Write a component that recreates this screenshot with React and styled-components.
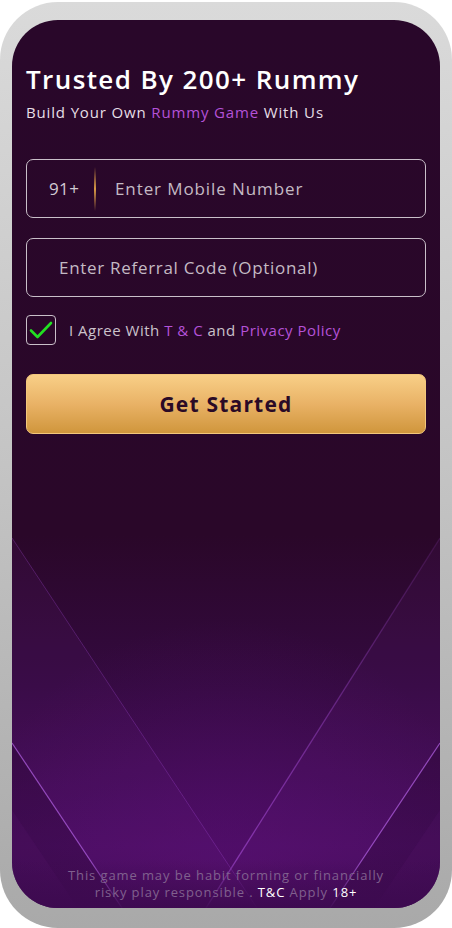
import React from "react";
import styled, { createGlobalStyle } from "styled-components";

const Global = createGlobalStyle`
  html, body { margin: 0; padding: 0; background: #ffffff; }
  body { font-family: "Open Sans", "DejaVu Sans", sans-serif; }
  * { box-sizing: border-box; }
`;

const Frame = styled.div`
  width: 452px;
  height: 926px;
  margin-top: 2px;
  padding: 18px 12px 18px 12px;
  border-radius: 58px;
  background: linear-gradient(180deg, #dadada 0%, #c4c4c4 50%, #a9a9a9 100%);
`;

const Screen = styled.div`
  position: relative;
  height: 888px;
  border-radius: 46px;
  overflow: hidden;
  background: linear-gradient(
    180deg,
    #29072a 0%,
    #2a0729 58%,
    #340a40 75%,
    #470c5e 93%,
    #3f0a52 100%
  );
  display: flex;
  flex-direction: column;
`;

const Backdrop = styled.svg`
  position: absolute;
  left: 0;
  top: 0;
  width: 428px;
  height: 888px;
  pointer-events: none;
`;

const Content = styled.div`
  position: relative;
  flex: 1;
  display: flex;
  flex-direction: column;
  padding: 41px 14px 0 14px;
`;

const Title = styled.h1`
  margin: 0;
  font-size: 26px;
  font-weight: 600;
  color: #ffffff;
  line-height: 36px;
  letter-spacing: 1.4px;
`;

const Subtitle = styled.p`
  margin: 5px 0 0 0;
  font-size: 15px;
  color: #e6dfe6;
  line-height: 20px;
  letter-spacing: 0.85px;
`;

const Accent = styled.span`
  color: ${(p) => (p.$white ? "#ffffff" : "#b452d8")};
`;

const Field = styled.div`
  display: flex;
  align-items: center;
  height: 59px;
  margin-top: ${(p) => p.$top}px;
  border: 1.5px solid #c9bfc9;
  border-radius: 7px;
  padding-left: ${(p) => p.$pad}px;
  color: #c4bac4;
  font-size: 17px;
  letter-spacing: ${(p) => p.$ls}px;
`;

const Code = styled.span`
  width: 45px;
  text-align: left;
  color: #d2c9d2;
  letter-spacing: 0.4px;
`;

const Divider = styled.span`
  width: 2px;
  height: 44px;
  margin-right: 19px;
  background: linear-gradient(
    180deg,
    rgba(220, 150, 60, 0) 0%,
    #d99a45 50%,
    rgba(220, 150, 60, 0) 100%
  );
`;

const AgreeRow = styled.div`
  display: flex;
  align-items: center;
  gap: 13px;
  margin-top: 18px;
  font-size: 15px;
  color: #cbc2cb;
  letter-spacing: 0.5px;
`;

const Check = styled.span`
  width: 30px;
  height: 30px;
  border: 1.5px solid #c9bfc9;
  border-radius: 4px;
  display: flex;
  align-items: center;
  justify-content: center;
`;

const Button = styled.button`
  margin-top: 29px;
  height: 60px;
  border: 1px solid #f3c77c;
  border-radius: 7px;
  background: linear-gradient(180deg, #f8cf87 0%, #e9b266 50%, #d0963c 100%);
  color: #2a0a26;
  font-family: inherit;
  font-size: 21px;
  font-weight: 700;
  letter-spacing: 1.2px;
`;

const Spacer = styled.div`
  flex: 1;
`;

const Footer = styled.p`
  margin: 0 0 7px 0;
  text-align: center;
  font-size: 13px;
  line-height: 17px;
  color: #80608e;
  letter-spacing: 0.9px;
`;

export default function App() {
  return (
    <>
      <Global />
      <Frame>
        <Screen>
          <Backdrop viewBox="0 0 428 888">
            <defs>
              <radialGradient id="glow" cx="214" cy="860" r="260" gradientUnits="userSpaceOnUse">
                <stop offset="0" stopColor="#5a0f75" stopOpacity="0.5" />
                <stop offset="1" stopColor="#5a0f75" stopOpacity="0" />
              </radialGradient>
              <linearGradient id="lineR" x1="0" y1="0" x2="0" y2="1">
                <stop offset="0" stopColor="#a64dd6" stopOpacity="0.15" />
                <stop offset="1" stopColor="#a64dd6" stopOpacity="0.7" />
              </linearGradient>
              <linearGradient id="fade" x1="0" y1="0" x2="0" y2="1">
                <stop offset="0" stopColor="#3d0a50" stopOpacity="0" />
                <stop offset="1" stopColor="#3d0a50" stopOpacity="0.95" />
              </linearGradient>
            </defs>
            <rect x="0" y="500" width="428" height="388" fill="url(#glow)" />
            <polygon points="0,518 245,888 0,888" fill="#7a2a90" fillOpacity="0.1" />
            <polygon points="428,518 194,888 428,888" fill="#7a2a90" fillOpacity="0.1" />
            <polygon points="0,723 110,888 0,888" fill="#1a0320" fillOpacity="0.25" />
            <polygon points="428,723 318,888 428,888" fill="#1a0320" fillOpacity="0.25" />
            <polygon points="0,790 66,888 0,888" fill="#6a2080" fillOpacity="0.12" />
            <polygon points="428,790 362,888 428,888" fill="#6a2080" fillOpacity="0.12" />
            <line x1="0" y1="518" x2="245" y2="888" stroke="#a64dd6" strokeOpacity="0.3" strokeWidth="1" />
            <line x1="428" y1="518" x2="194" y2="888" stroke="url(#lineR)" strokeWidth="1.3" />
            <line x1="0" y1="723" x2="110" y2="888" stroke="#b060e0" strokeOpacity="0.75" strokeWidth="1.2" />
            <line x1="428" y1="723" x2="318" y2="888" stroke="#b060e0" strokeOpacity="0.75" strokeWidth="1.2" />
            <rect x="0" y="840" width="428" height="48" fill="url(#fade)" />
          </Backdrop>
          <Content>
            <Title>Trusted By 200+ Rummy</Title>
            <Subtitle>
              Build Your Own <Accent>Rummy Game</Accent> With Us
            </Subtitle>
            <Field $top={37} $pad={22} $ls={0.9}>
              <Code>91+</Code>
              <Divider />
              <span>Enter Mobile Number</span>
            </Field>
            <Field $top={20} $pad={32} $ls={0.7}>
              <span>Enter Referral Code (Optional)</span>
            </Field>
            <AgreeRow>
              <Check>
                <svg width="24" height="20" viewBox="0 0 24 20">
                  <path d="M2 10.5 L8.5 17 L22 3" fill="none" stroke="#22e022" strokeWidth="2.6" strokeLinecap="round" strokeLinejoin="round" />
                </svg>
              </Check>
              <span>
                I Agree With <Accent>T &amp; C</Accent> and <Accent>Privacy Policy</Accent>
              </span>
            </AgreeRow>
            <Button>Get Started</Button>
            <Spacer />
            <Footer>
              This game may be habit forming or financially
              <br />
              risky play responsible . <Accent $white>T&amp;C</Accent> Apply{" "}
              <Accent $white>18+</Accent>
            </Footer>
          </Content>
        </Screen>
      </Frame>
    </>
  );
}
